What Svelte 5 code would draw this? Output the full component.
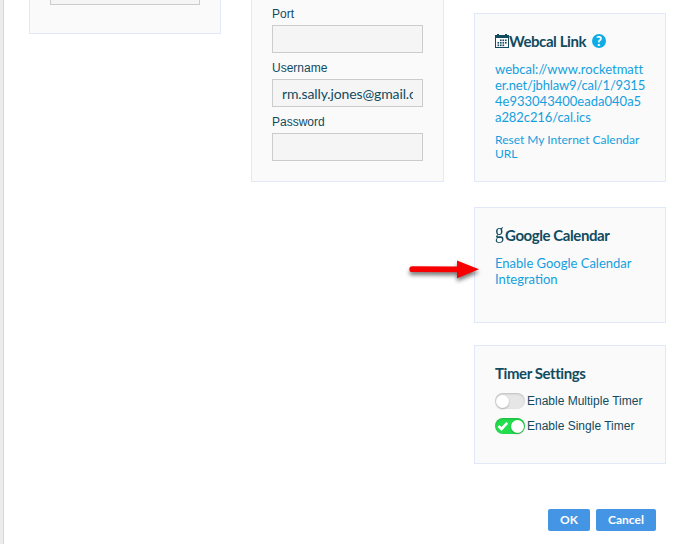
<script>
  let username = $state('rm.sally.jones@gmail.com');

  let timers = $state([
    { label: 'Enable Multiple Timer', on: false },
    { label: 'Enable Single Timer', on: true }
  ]);

  // webcal address, split where the narrow card wraps it
  const webcal = [
    { text: 'webcal://www.rocketmatt', spacing: 0.02 },
    { text: 'er.net/jbhlaw9/cal/1/9315', spacing: -0.16 },
    { text: '4e933043400eada040a5', spacing: 0.01 },
    { text: 'a282c216/cal.ics', spacing: -0.08 }
  ];

  // cells of the calendar icon
  const cells = [
    [5, 5.5], [7.5, 5.5], [10, 5.5],
    [2.5, 8], [5, 8], [7.5, 8], [10, 8],
    [2.5, 10.5], [5, 10.5], [7.5, 10.5]
  ];
</script>

<div class="page">
  <div class="columns">
    <section class="card profile">
      <div class="box"></div>
    </section>

    <section class="card server">
      <label for="port">Port</label>
      <input id="port" type="text" />
      <label for="username">Username</label>
      <input id="username" type="text" bind:value={username} />
      <label for="password">Password</label>
      <input id="password" type="password" />
    </section>

    <div class="side">
      <section class="card webcal">
        <h2>
          <svg class="cal" width="14" height="14" viewBox="0 0 14 14">
            <path d="M0 1H2V0H4V1H10V0H12V1H14V14H0Z" fill="#114b5f" />
            <path d="M1 4H13V13H1Z" fill="#fafafa" />
            {#each cells as [x, y]}
              <rect {x} {y} width="1.6" height="1.6" fill="#114b5f" />
            {/each}
          </svg>
          <span class="title">Webcal Link</span>
          <span class="help">?</span>
        </h2>
        <a class="link" href="#webcal">
          {#each webcal as line}
            <span class="line" style="letter-spacing:{line.spacing}px">{line.text}</span>
          {/each}
        </a>
        <a class="reset" href="#reset">Reset My Internet Calendar URL</a>
      </section>

      <section class="card google">
        <h2><span class="g">g</span><span class="title">Google Calendar</span></h2>
        <a class="link enable" href="#google">Enable Google Calendar Integration</a>
        <svg class="arrow" width="76" height="28" viewBox="0 0 76 28">
          <path d="M4.2 8.3L49 8.6V2.4L71 11.3L49 20.2V14.2L4.2 14A2.8 2.8 0 0 1 4.2 8.3Z" />
        </svg>
      </section>

      <section class="card timer">
        <h2><span class="title">Timer Settings</span></h2>
        {#each timers as t}
          <button class="row" onclick={() => (t.on = !t.on)}>
            <span class="switch" class:on={t.on}>
              {#if t.on}
                <svg width="12" height="10" viewBox="0 0 12 10">
                  <path d="M1.5 5L4.5 8L10.2 1.8" fill="none" stroke="#fff" stroke-width="2.6" />
                </svg>
              {/if}
              <span class="knob"></span>
            </span>
            <span class="name">{t.label}</span>
          </button>
        {/each}
      </section>
    </div>
  </div>

  <div class="actions">
    <button class="btn ok">OK</button>
    <button class="btn cancel">Cancel</button>
  </div>
</div>

<style>
  :global(body) {
    background: #fff;
    overflow: hidden;
  }
  .page {
    box-sizing: border-box;
    height: 544px;
    border-left: 3px solid #ececec;
    box-shadow: inset 1px 0 #d8d8d8;
    color: #114b5f;
    font-family: "Liberation Sans", Arial, sans-serif;
    font-size: 12px;
  }
  .columns {
    display: flex;
    align-items: flex-start;
    gap: 30px;
    height: 509px;
    padding-left: 26px;
  }
  .card {
    box-sizing: border-box;
    background: #fafafa;
    border: 1px solid #e1e9f8;
    padding: 0 20px;
  }
  .profile {
    width: 192px;
    height: 34px;
    border-top: 0;
  }
  .box {
    box-sizing: border-box;
    height: 5px;
    border: 1px solid #ccc;
    border-top: 0;
    background: #f5f5f5;
  }
  .server {
    width: 193px;
    height: 182px;
    border-top: 0;
    padding-top: 3px;
  }
  label {
    display: block;
    height: 22px;
    line-height: 22px;
  }
  input {
    display: block;
    box-sizing: border-box;
    width: 151px;
    height: 28px;
    margin: 0 0 4px;
    padding: 2px 9px;
    border: 1px solid #ccc;
    border-radius: 0;
    outline: 0;
    background: #f5f5f5;
    color: #114b5f;
    font: 14px Lato, sans-serif;
    letter-spacing: -0.12px;
  }
  .side {
    width: 192px;
    padding-top: 13px;
  }
  .webcal {
    height: 169px;
    margin-bottom: 25px;
  }
  .google {
    position: relative;
    height: 116px;
    margin-bottom: 22px;
  }
  .timer {
    height: 119px;
  }
  h2 {
    display: flex;
    align-items: center;
    height: 18px;
    margin: 18px 0 11px;
    font: bold 15px/18px Lato, sans-serif;
    letter-spacing: -0.42px;
    white-space: nowrap;
  }
  .cal {
    flex-shrink: 0;
  }
  .help {
    width: 14px;
    height: 14px;
    margin-left: 6px;
    border-radius: 50%;
    background: #0fabe6;
    color: #fff;
    font-size: 13px;
    font-weight: 900;
    letter-spacing: 0;
    line-height: 14px;
    text-align: center;
  }
  .g {
    width: 10px;
    margin-top: -8px;
    font: 20px/18px "Liberation Serif", serif;
    transform: scaleX(0.88);
    transform-origin: left;
  }
  a {
    display: block;
    color: #14a0de;
    font-family: Lato, sans-serif;
    text-decoration: none;
  }
  .link {
    font-size: 13px;
    line-height: 16px;
  }
  .line {
    display: block;
    white-space: nowrap;
  }
  .reset {
    margin-top: 8px;
    font-size: 12px;
    line-height: 14px;
  }
  .arrow {
    position: absolute;
    left: -67px;
    top: 50px;
    fill: #f80000;
    filter: drop-shadow(0 3px 2px rgba(0, 0, 0, 0.55));
  }
  .row {
    display: flex;
    align-items: center;
    gap: 2px;
    height: 16px;
    margin-bottom: 9px;
    padding: 0;
    border: 0;
    background: none;
    color: inherit;
    font: inherit;
    white-space: nowrap;
  }
  .switch {
    box-sizing: border-box;
    display: flex;
    align-items: center;
    width: 30px;
    height: 16px;
    padding: 0 1px;
    border-radius: 8px;
    background: #e6e6e6;
    box-shadow: inset 0 1px 2px rgba(0, 0, 0, 0.18);
  }
  .switch.on {
    justify-content: space-between;
    padding-left: 2px;
    background: #22dd4c;
  }
  .knob {
    width: 13px;
    height: 13px;
    border-radius: 50%;
    background: #fff;
    box-shadow: 0 1px 2px rgba(0, 0, 0, 0.25);
  }
  .actions {
    display: flex;
    justify-content: flex-end;
    gap: 6px;
    padding-right: 28px;
  }
  .btn {
    height: 22px;
    padding: 0;
    border: 0;
    border-radius: 2px;
    background: #4495e3;
    color: #fff;
    font: bold 12px/22px Lato, sans-serif;
  }
  .ok {
    width: 42px;
  }
  .cancel {
    width: 60px;
  }
</style>
